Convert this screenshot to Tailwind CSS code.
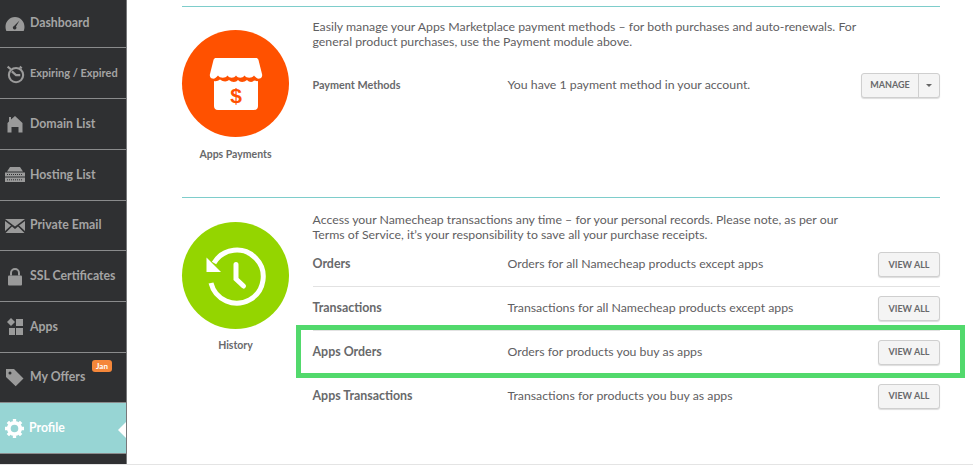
<!DOCTYPE html>
<html><head><meta charset="utf-8"><script src="https://cdn.jsdelivr.net/npm/@tailwindcss/browser@4"></script></head>
<body class="bg-white">
<div class="relative flex w-[973px] h-[465px] overflow-hidden border-b border-[#e4e4e4] font-['Lato',sans-serif]">
<nav class="w-[127px] shrink-0 h-full bg-[#2f3032] border-r border-[#77787a] flex flex-col text-[12.3px] font-bold text-[#a4a4a4] overflow-hidden">
  <div class="shrink-0 h-[48px] border-b border-[#8a8b8c] flex items-center gap-[5px] pl-[5px]"><svg class="w-[20px] h-[16px] shrink-0" viewBox="0 0 20 16"><path fill="#9a9a9a" fill-rule="evenodd" d="M10 1C4.500 1 .5 5.500.5 11c0 1.500.3 2.800.8 4h17.400c.5-1.200.8-2.500.8-4C19.500 5.500 15.500 1 10 1zM14.500 4.500L11 10.500a1.800 1.800 0 1 1-2-.5z"/></svg><span>Dashboard</span></div>
  <div class="shrink-0 h-[51px] border-b border-[#8a8b8c] flex items-center gap-[4px] pl-[5px]"><svg class="w-[21px] h-[21px] shrink-0" viewBox="0 0 20 20" fill="none" stroke="#9a9a9a"><circle cx="10.500" cy="11.500" r="6.800" stroke-width="2"/><path d="M2.500 3.500l3 2.500M14 3.500l2 1.500M6.500 8l4 3.500h4" stroke-width="2"/></svg><span class="text-[11px]">Expiring / Expired</span></div>
  <div class="shrink-0 h-[51px] border-b border-[#8a8b8c] flex items-center gap-[7px] pl-[7px]"><svg class="w-[16px] h-[18px] shrink-0" viewBox="0 0 16 18"><path fill="#9a9a9a" d="M8 1l7.500 7v9.500h-4V12h-7v5.500h-4V8l1.500-1.500V2h2v2.500z"/></svg><span>Domain List</span></div>
  <div class="shrink-0 h-[51px] border-b border-[#8a8b8c] flex items-center gap-[5px] pl-[5px]"><svg class="w-[20px] h-[16px] shrink-0" viewBox="0 0 20 16"><path fill="#9a9a9a" d="M5 0h10l3 4.500H2zM0 5.500h20v4H0zM0 10.500h20v4.500H0z"/><path stroke="#2f3032" stroke-dasharray="1 1" d="M2 7.500h16M2 12.800h16"/></svg><span>Hosting List</span></div>
  <div class="shrink-0 h-[50px] border-b border-[#8a8b8c] flex items-center gap-[5px] pl-[5px]"><svg class="w-[20px] h-[14px] shrink-0" viewBox="0 0 20 14"><path fill="#9a9a9a" d="M0 0h20L10 7.500zM0 2v10l6-5.500zM20 2v10l-6-5.500zM7 7.500l3 2.500 3-2.500 6.500 6.500H.5z"/></svg><span>Private Email</span></div>
  <div class="shrink-0 h-[51px] border-b border-[#8a8b8c] flex items-center gap-[7px] pl-[7px]"><svg class="w-[16px] h-[19px] shrink-0" viewBox="0 0 16 18" fill="none"><path stroke="#9a9a9a" stroke-width="2" d="M4 8V5.500a4 4 0 0 1 8 0V8"/><rect x="1" y="8" width="14" height="10" rx="1" fill="#9a9a9a"/></svg><span>SSL Certificates</span></div>
  <div class="shrink-0 h-[51px] border-b border-[#8a8b8c] flex items-center gap-[6px] pl-[6px]"><svg class="w-[18px] h-[18px] shrink-0" viewBox="0 0 18 18"><path fill="#9a9a9a" d="M5 0l4 4-4 4-4-4zM10 1h7v7h-7zM3 10h6v7H3zM10 10h7v7h-7z"/></svg><span>Apps</span></div>
  <div class="relative shrink-0 h-[50px] flex items-center gap-[6px] pl-[6px] border-b border-[#8a8b8c]"><svg class="w-[18px] h-[18px] shrink-0" viewBox="0 0 18 18"><path fill="#9a9a9a" fill-rule="evenodd" d="M0 0h8l9.500 9.500-7.800 7.800L0 8zM4 2.500a1.500 1.500 0 1 0 0 3 1.500 1.500 0 0 0 0-3z"/></svg><span>My Offers</span><span class="absolute left-[92px] top-[7px] w-[20px] h-[12px] rounded-[3px] bg-[#f5873a] text-white text-[8px] leading-[12px] text-center">Jan</span></div>
  <div class="relative shrink-0 h-[51px] bg-[#97d5d4] flex items-center gap-[5px] pl-[5px] text-white border-b border-[#8a8b8c]"><svg class="w-[19px] h-[19px] shrink-0" viewBox="0 0 20 20"><circle cx="10" cy="10" r="6" fill="none" stroke="#fff" stroke-width="4"/><path stroke="#fff" stroke-width="3.500" d="M10 0v3M10 17v3M0 10h3M17 10h3M3 3l2 2M15 15l2 2M17 3l-2 2M5 15l-2 2"/></svg><span>Profile</span><span class="absolute right-0 top-[19px] w-0 h-0 border-y-[8px] border-y-transparent border-r-[8px] border-r-white"></span></div>
</nav>
<main class="relative flex-1 pl-[55px] pt-[6px] text-[#5f6062] text-[12px]">
  <section class="w-[758px] h-[192px] border-t border-[#7ecdcb] flex">
    <div class="w-[130.500px] shrink-0 pt-[23px]">
      <div class="w-[107px] h-[107px] rounded-full bg-[#ff5100] flex items-center justify-center"><svg class="w-[54px] h-[54px]" viewBox="0 0 54 54"><path fill="#fff" d="M7 1h40c1 0 2 .5 2.500 2L53 17c.5 1.500 0 4-2 4.500-2.500.5-4-.5-6-3-2 3-7.500 3-9.500 0-2 3-6.500 3-8.500 0-2 3-6.500 3-8.500 0-2 3-7.500 3-9.500 0-2 2.500-3.500 3.500-6 3-2-.5-2.500-3-2-4.500L4.500 3C5 1.500 6 1 7 1z"/><path fill="#fff" d="M5 24c2 .5 4 0 6-1.500 3 2.500 7 2.500 9 .5 3 2.500 7 2.500 9 0 2 2.500 6 2.500 9 0 2 2.500 6 2.500 7 .5 1.500 0 2.500 1 4 .5V49c0 2-1 4-4 4H9c-3 0-4-2-4-4z"/><text x="27" y="46" text-anchor="middle" font-family="Liberation Sans" font-weight="700" font-size="21" fill="#ff5100">$</text></svg></div>
      <div class="w-[107px] text-center mt-[10px] text-[10.500px] font-bold leading-[14px] text-[#68696b]">Apps Payments</div>
    </div>
    <div class="flex-1 pt-[12px]">
      <p class="text-[12.3px] leading-[15px] w-[560px]">Easily manage your Apps Marketplace payment methods – for both purchases and auto-renewals. For general product purchases, use the Payment module above.</p>
      <div class="flex items-center mt-[23px] h-[26px]">
        <span class="w-[195px] shrink-0 text-[10.800px] font-bold text-[#68696b]">Payment Methods</span><span class="flex-1 text-[12.3px]">You have 1 payment method in your account.</span>
        <div class="flex h-[25px] rounded-[3px] border border-[#cfcfcf] bg-[#f4f4f4] text-[9px] font-bold text-[#68696b] shadow-[0_1px_1px_#ddd]"><span class="w-[57px] flex items-center justify-center border-r border-[#cfcfcf]">MANAGE</span><span class="w-[20px] flex items-center justify-center"><span class="w-0 h-0 border-x-[3px] border-x-transparent border-t-[3px] border-t-[#666]"></span></span></div>
      </div>
    </div>
  </section>
  <section class="w-[758px] border-t border-[#7ecdcb] flex mt-[-1px]">
    <div class="w-[130.500px] shrink-0 pt-[24px]">
      <div class="w-[107px] h-[107px] rounded-full bg-[#94d500] flex items-center justify-center"><svg class="w-[62px] h-[62px]" viewBox="0 0 62 62" fill="none" stroke="#fff"><path stroke-width="5" d="M9 18A26.500 26.500 0 1 1 6 38"/><path fill="#fff" stroke="none" d="M1.500 12.500V27H16z"/><path stroke-width="5" stroke-linecap="round" d="M31 19.500V34L38.500 41"/></svg></div>
      <div class="w-[107px] text-center mt-[9px] text-[10.500px] font-bold leading-[14px] text-[#68696b]">History</div>
    </div>
    <div class="flex-1 pt-[14px]">
      <p class="text-[12.3px] leading-[15px] w-[560px]">Access your Namecheap transactions any time – for your personal records. Please note, as per our Terms of Service, it’s your responsibility to save all your purchase receipts.</p>
      <div class="flex items-center h-[44px] mt-[1px] border-b border-[#e2e2e2]"><span class="w-[195px] shrink-0 text-[12.400px] font-bold text-[#68696b]">Orders</span><span class="flex-1 text-[12.3px]">Orders for all Namecheap products except apps</span><span class="w-[62px] h-[25px] rounded-[3px] border border-[#cfcfcf] bg-[#f4f4f4] text-[9px] font-bold text-[#68696b] flex items-center justify-center shadow-[0_1px_1px_#ddd]">VIEW ALL</span></div>
      <div class="flex items-center h-[44px] border-b border-[#e2e2e2]"><span class="w-[195px] shrink-0 text-[12.400px] font-bold text-[#68696b]">Transactions</span><span class="flex-1 text-[12.3px]">Transactions for all Namecheap products except apps</span><span class="w-[62px] h-[25px] rounded-[3px] border border-[#cfcfcf] bg-[#f4f4f4] text-[9px] font-bold text-[#68696b] flex items-center justify-center shadow-[0_1px_1px_#ddd]">VIEW ALL</span></div>
      <div class="flex items-center h-[43px] border-b border-[#e2e2e2]"><span class="w-[195px] shrink-0 text-[12.400px] font-bold text-[#68696b]">Apps Orders</span><span class="flex-1 text-[12.3px]">Orders for products you buy as apps</span><span class="w-[62px] h-[25px] rounded-[3px] border border-[#cfcfcf] bg-[#f4f4f4] text-[9px] font-bold text-[#68696b] flex items-center justify-center shadow-[0_1px_1px_#ddd]">VIEW ALL</span></div>
      <div class="flex items-center h-[44px]"><span class="w-[195px] shrink-0 text-[12.400px] font-bold text-[#68696b]">Apps Transactions</span><span class="flex-1 text-[12.3px]">Transactions for products you buy as apps</span><span class="w-[62px] h-[25px] rounded-[3px] border border-[#cfcfcf] bg-[#f4f4f4] text-[9px] font-bold text-[#68696b] flex items-center justify-center shadow-[0_1px_1px_#ddd]">VIEW ALL</span></div>
    </div>
  </section>
</main>
<div class="absolute left-[296px] top-[325px] w-[669px] h-[53px] border-[5px] border-[#52d96c] pointer-events-none"></div>
</div>
</body></html>
